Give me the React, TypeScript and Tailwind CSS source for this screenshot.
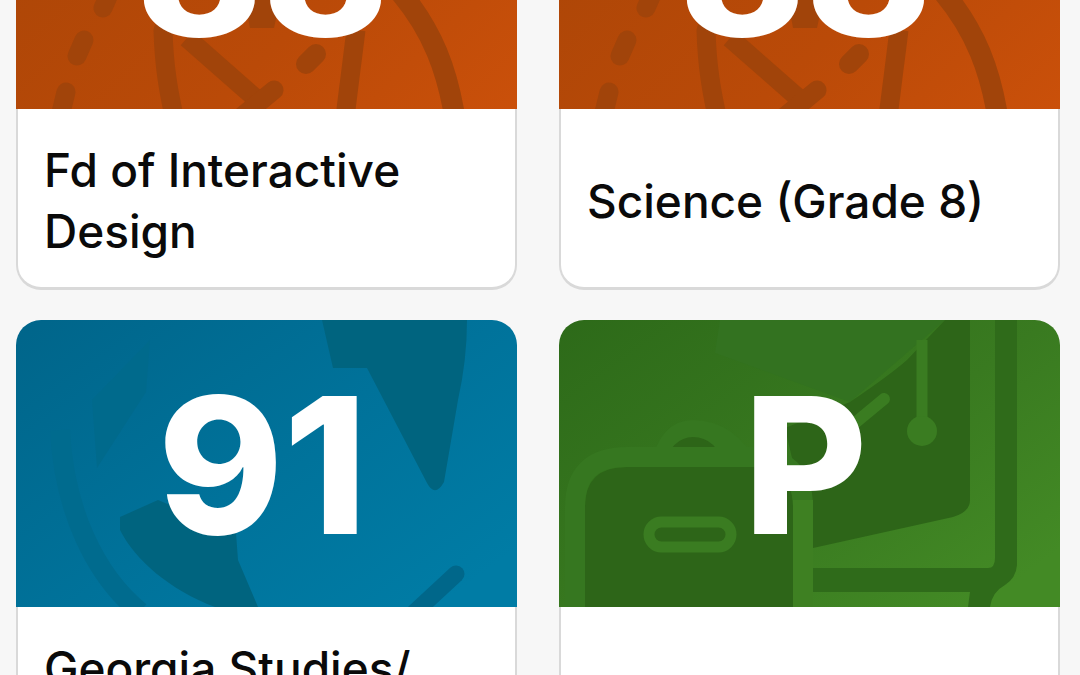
import React from 'react';

// art is drawn in page coordinates of the left/top card it was measured on,
// the wrapping <g> moves it back into the 501x287 header box
function OrangeArt({ shift }: { shift: number }) {
    return (
        <svg className="absolute inset-0 h-full w-full" viewBox="0 0 501 287">
            <defs>
                <linearGradient id={`orange${shift}`} x1="0" y1="0.4" x2="1" y2="1">
                    <stop offset="0" stopColor="#ad4607" />
                    <stop offset="0.55" stopColor="#ba4a08" />
                    <stop offset="1" stopColor="#ca500a" />
                </linearGradient>
            </defs>
            <rect width="501" height="287" fill={`url(#orange${shift})`} />
            <g transform="translate(-16 178)" fill="none" stroke="#a1440a" strokeWidth="19" strokeLinecap="round">
                <path d="M110 -8 L103 8" />
                <path d="M84 40 L77 56" />
                <path d="M66 92 L58 125" />
                <path d="M163 30 C164 65 168 90 176 125" />
                <path d="M187 38 L262 104" strokeLinecap="butt" />
                <path d="M240 118 L274 90" />
                <path d="M316 54 L306 64" strokeWidth="20" />
                <path d="M356 30 L344 125" strokeLinecap="butt" />
                <path d="M400 -8 C432 30 448 70 456 125" strokeWidth="21" />
                <path d="M245 0 L280 0 L274 28 L250 28 Z" fill="#a1440a" stroke="none" />
            </g>
        </svg>
    );
}

function BlueArt() {
    return (
        <svg className="absolute inset-0 h-full w-full" viewBox="0 0 501 287">
            <defs>
                <linearGradient id="blue" x1="0" y1="0" x2="1" y2="0.8">
                    <stop offset="0" stopColor="#00658a" />
                    <stop offset="0.55" stopColor="#00729a" />
                    <stop offset="1" stopColor="#007ca5" />
                </linearGradient>
            </defs>
            <rect width="501" height="287" fill="url(#blue)" />
            <g transform="translate(-16 -320)">
                <path d="M322 320 L333 368 L367 368 L427 483 Q435 498 444 482 L458 400 Q467 360 467 320 Z" fill="#00647f" />
                <path d="M120 517 L158 500 L236 533 L238 560 L258 607 L215 607 C170 590 135 560 120 530 Z" fill="#00647f" />
                <path d="M60 430 C64 510 95 575 140 612" fill="none" stroke="#006b8e" strokeWidth="20" />
                <path d="M92 400 L97 468 L146 392 L150 340 Z" fill="#006a8c" />
                <path d="M456 574 L415 612" fill="none" stroke="#00678a" strokeWidth="17" strokeLinecap="round" />
            </g>
        </svg>
    );
}

function GreenArt() {
    return (
        <svg className="absolute inset-0 h-full w-full" viewBox="0 0 501 287">
            <defs>
                <linearGradient id="green" x1="0" y1="0" x2="1" y2="0.8">
                    <stop offset="0" stopColor="#2d6a19" />
                    <stop offset="0.6" stopColor="#397a20" />
                    <stop offset="1" stopColor="#438a25" />
                </linearGradient>
            </defs>
            <rect width="501" height="287" fill="url(#green)" />
            <g transform="translate(-559 -320)">
                <path d="M715 353 L850 402 L945 320 L720 320 Z" fill="#337220" />
                <path d="M785 428 L850 402 Q890 375 907 360 L945 320 L970 320 L970 500 Q970 512 953 517 L813 548 Z" fill="#2d6518" />
                <path d="M650 467 Q660 420 693 420 Q735 420 760 467 Z" fill="#367720" />
                <path d="M663 467 Q672 437 693 437 Q716 437 725 467 Z" fill="#2d6518" />
                <path d="M675 466 Q690 453 708 466 Z" fill="#367720" />
                <path d="M585 607 L585 507 Q585 467 627 467 L752 467 Q793 467 793 507 L793 607 Z" fill="#2d6518" />
                <path d="M575 607 L575 507 Q575 457 627 457 L752 457 Q803 457 803 507 L803 607" fill="none" stroke="#367720" strokeWidth="20" />
                <path d="M803 500 L803 607" fill="none" stroke="#3e8022" strokeWidth="20" />
                <rect x="649" y="522" width="82" height="25" rx="12.5" fill="#2d6518" stroke="#3a7c21" strokeWidth="11" />
                <path d="M922 340 L922 430" fill="none" stroke="#3a7c21" strokeWidth="11" />
                <circle cx="922" cy="431" r="15" fill="#3a7c21" />
                <path d="M855 423 L884 399" fill="none" stroke="#3a7c21" strokeWidth="12" strokeLinecap="round" />
                <path d="M813 568 L988 568 Q995 568 995 558 L995 320 L1017 320 L1017 565 Q1016 578 1005 585 Q992 592 990 607 L968 607 L970 592 L813 592 Z" fill="#2f6b1a" />
            </g>
        </svg>
    );
}

type CardProps = {
    art: React.ReactNode;
    mark: string;
    title: string;
};

function CourseCard({ art, mark, title }: CardProps) {
    return (
        <div className="flex h-[468px] flex-col">
            <div className="relative flex h-[287px] shrink-0 items-center justify-center overflow-hidden rounded-t-[25px]">
                {art}
                <span className="relative pr-[8px] pt-[2px] text-[190px] font-extrabold leading-none text-white">{mark}</span>
            </div>
            <div className="flex h-[181px] items-center rounded-b-[25px] border-x-2 border-b-[3px] border-[#d9d9d9] bg-white pl-[26px] pr-8 pt-[6px]">
                <p className="whitespace-pre-line text-[46px] font-medium leading-[61px] text-[#0a0a0a]">{title}</p>
            </div>
        </div>
    );
}

export default function App() {
    return (
        <div className="h-[675px] overflow-hidden bg-[#f7f7f7] font-['Inter',sans-serif]">
            <div className="mt-[-178px] grid grid-cols-[501px_501px] gap-x-[42px] gap-y-[30px] pl-4">
                <CourseCard art={<OrangeArt shift={1} />} mark="88" title="Fd of Interactive Design" />
                <CourseCard art={<OrangeArt shift={2} />} mark="88" title="Science (Grade 8)" />
                <CourseCard art={<BlueArt />} mark="91" title={'Georgia Studies/\n\u00a0'} />
                <CourseCard art={<GreenArt />} mark="P" title="" />
            </div>
        </div>
    );
}
